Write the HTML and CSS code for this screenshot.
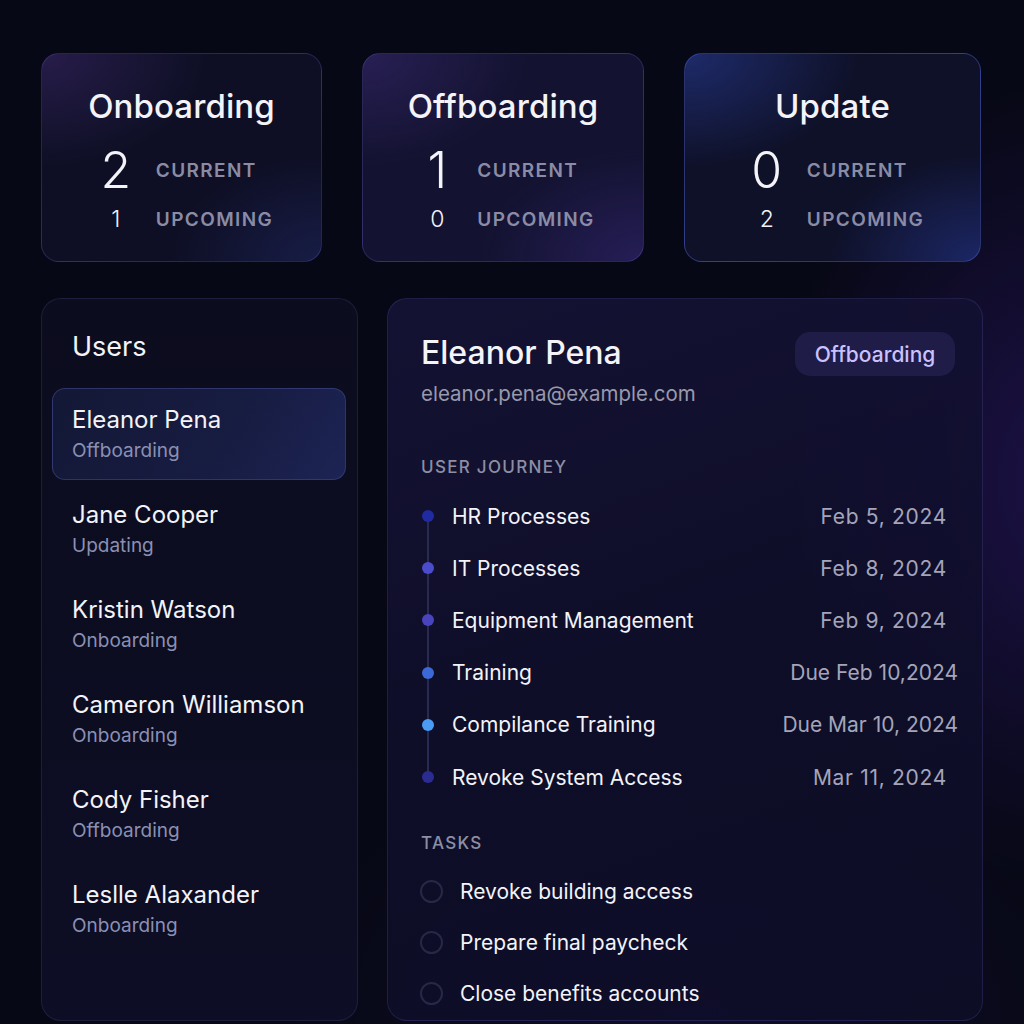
FILE: index.html
```html
<!DOCTYPE html>
<html lang="en">
<head>
<meta charset="utf-8">
<title>User Journeys</title>
<link rel="stylesheet" href="styles.css">
</head>
<body>
<div class="page">
  <section class="summary">
    <div class="stat-card card-purple">
      <h2 class="stat-title">Onboarding</h2>
      <div class="stat-grid">
        <span class="num-big">2</span><span class="stat-label">CURRENT</span>
        <span class="num-small">1</span><span class="stat-label">UPCOMING</span>
      </div>
    </div>
    <div class="stat-card card-violet">
      <h2 class="stat-title">Offboarding</h2>
      <div class="stat-grid">
        <span class="num-big">1</span><span class="stat-label">CURRENT</span>
        <span class="num-small">0</span><span class="stat-label">UPCOMING</span>
      </div>
    </div>
    <div class="stat-card card-blue">
      <h2 class="stat-title">Update</h2>
      <div class="stat-grid">
        <span class="num-big">0</span><span class="stat-label">CURRENT</span>
        <span class="num-small">2</span><span class="stat-label">UPCOMING</span>
      </div>
    </div>
  </section>

  <section class="main">
    <aside class="users">
      <h3 class="users-title">Users</h3>
      <ul class="user-list">
        <li class="user selected"><span class="user-name">Eleanor Pena</span><span class="user-status">Offboarding</span></li>
        <li class="user"><span class="user-name">Jane Cooper</span><span class="user-status">Updating</span></li>
        <li class="user"><span class="user-name">Kristin Watson</span><span class="user-status">Onboarding</span></li>
        <li class="user"><span class="user-name">Cameron Williamson</span><span class="user-status">Onboarding</span></li>
        <li class="user"><span class="user-name">Cody Fisher</span><span class="user-status">Offboarding</span></li>
        <li class="user"><span class="user-name">Leslle Alaxander</span><span class="user-status">Onboarding</span></li>
      </ul>
    </aside>

    <article class="detail">
      <header class="detail-head">
        <div>
          <h1 class="detail-name">Eleanor Pena</h1>
          <div class="detail-email">eleanor.pena@example.com</div>
        </div>
        <span class="badge">Offboarding</span>
      </header>

      <h4 class="section-label journey-label">USER JOURNEY</h4>
      <ul class="timeline">
        <li class="step"><span class="dot d1"></span><span class="step-name">HR Processes</span><span class="step-date">Feb 5, 2024</span></li>
        <li class="step"><span class="dot d2"></span><span class="step-name">IT Processes</span><span class="step-date">Feb 8, 2024</span></li>
        <li class="step"><span class="dot d3"></span><span class="step-name">Equipment Management</span><span class="step-date">Feb 9, 2024</span></li>
        <li class="step"><span class="dot d4"></span><span class="step-name">Training</span><span class="step-date due">Due Feb 10,2024</span></li>
        <li class="step"><span class="dot d5"></span><span class="step-name">Compilance Training</span><span class="step-date due">Due Mar 10, 2024</span></li>
        <li class="step"><span class="dot d6"></span><span class="step-name">Revoke System Access</span><span class="step-date">Mar 11, 2024</span></li>
      </ul>

      <h4 class="section-label tasks-label">TASKS</h4>
      <ul class="tasks">
        <li class="task"><span class="check"></span>Revoke building access</li>
        <li class="task"><span class="check"></span>Prepare final paycheck</li>
        <li class="task"><span class="check"></span>Close benefits accounts</li>
      </ul>
    </article>
  </section>
</div>
</body>
</html>
```

FILE: styles.css
```css
* { box-sizing: border-box; }

html, body { margin: 0; padding: 0; }

body {
  width: 1024px;
  height: 1024px;
  overflow: hidden;
  font-family: Inter, "Noto Sans", "Liberation Sans", sans-serif;
  color: #f3f3f8;
  background:
    radial-gradient(ellipse 420px 560px at 1070px 480px, rgba(58, 30, 140, 0.42), rgba(58, 30, 140, 0) 72%),
    radial-gradient(ellipse 600px 420px at 700px 1024px, rgba(30, 24, 80, 0.35), rgba(30, 24, 80, 0) 70%),
    #070815;
}

.page {
  padding: 53px 0 0 41px;
}

/* summary cards */
.summary {
  display: grid;
  grid-template-columns: 281px 282px 297px;
  column-gap: 40px;
  height: 209px;
}

.stat-card {
  border-radius: 18px;
  border: 1px solid rgba(110, 100, 200, 0.26);
  padding-top: 30px;
  display: flex;
  flex-direction: column;
  align-items: center;
}

.card-purple {
  background:
    radial-gradient(ellipse 220px 150px at 0% 0%, rgba(70, 45, 120, 0.45), rgba(70, 45, 120, 0) 75%),
    radial-gradient(ellipse 200px 140px at 100% 100%, rgba(35, 45, 110, 0.45), rgba(35, 45, 110, 0) 75%),
    #0e0f25;
}
.card-violet {
  background:
    radial-gradient(ellipse 220px 150px at 0% 0%, rgba(60, 45, 120, 0.5), rgba(60, 45, 120, 0) 75%),
    radial-gradient(ellipse 220px 150px at 100% 100%, rgba(55, 42, 125, 0.5), rgba(55, 42, 125, 0) 75%),
    #131230;
}
.card-blue {
  border-color: rgba(80, 100, 210, 0.42);
  background:
    radial-gradient(ellipse 230px 150px at 0% 0%, rgba(40, 60, 150, 0.6), rgba(40, 60, 150, 0) 75%),
    radial-gradient(ellipse 200px 140px at 100% 100%, rgba(40, 60, 160, 0.5), rgba(40, 60, 160, 0) 75%),
    #0f1129;
}

.stat-title {
  margin: 0;
  font-size: 33px;
  font-weight: 500;
  line-height: 44px;
  letter-spacing: 0.1px;
}

.stat-grid {
  margin-top: 15px;
  margin-left: 6px;
  display: grid;
  grid-template-columns: 40px auto;
  grid-template-rows: 54px 44px;
  column-gap: 20px;
  align-items: center;
}

.num-big {
  text-align: center;
  font-size: 50px;
  font-weight: 300;
  line-height: 54px;
}
.num-small {
  text-align: center;
  font-size: 23px;
  font-weight: 300;
  line-height: 30px;
}
.stat-label {
  font-size: 19px;
  font-weight: 600;
  letter-spacing: 1.4px;
  color: #8a8ca6;
}

/* main */
.main {
  margin-top: 36px;
  display: grid;
  grid-template-columns: 317px 596px;
  column-gap: 29px;
  height: 723px;
}

.users {
  border-radius: 20px;
  border: 1px solid rgba(90, 90, 160, 0.22);
  background: linear-gradient(180deg, rgba(12, 13, 30, 0.95), rgba(14, 14, 38, 0.95));
  padding: 30px 11px 0 10px;
}

.users-title {
  margin: 0 0 23px 20px;
  font-size: 27px;
  font-weight: 400;
  line-height: 36px;
}

.user-list {
  list-style: none;
  margin: 0;
  padding: 0;
  display: flex;
  flex-direction: column;
  gap: 3px;
}

.user {
  height: 92px;
  padding: 14px 20px 0 19px;
  display: flex;
  flex-direction: column;
  border-radius: 13px;
  border: 1px solid transparent;
}

.user.selected {
  background: linear-gradient(120deg, #141836 0%, #171c42 60%, #1d2454 100%);
  border-color: rgba(70, 80, 150, 0.5);
}

.user-name {
  font-size: 24px;
  line-height: 33px;
  font-weight: 400;
}
.user-status {
  font-size: 19px;
  line-height: 30px;
  color: #8a90b4;
}

/* detail */
.detail {
  border-radius: 20px;
  border: 1px solid rgba(100, 90, 180, 0.22);
  background: linear-gradient(160deg, rgba(22, 20, 56, 0.85) 0%, rgba(16, 15, 44, 0.85) 50%, rgba(14, 14, 40, 0.85) 100%);
  padding: 34px 27px 0 33px;
}

.detail-head {
  display: flex;
  justify-content: space-between;
  align-items: flex-start;
}

.detail-name {
  margin: 0;
  font-size: 32px;
  font-weight: 500;
  line-height: 40px;
}

.detail-email {
  margin-top: 5px;
  font-size: 20.5px;
  line-height: 32px;
  color: #9899ad;
}

.badge {
  margin-top: -1px;
  width: 160px;
  height: 44px;
  border-radius: 15px;
  background: #1f1c48;
  color: #c9c2ff;
  font-size: 21px;
  font-weight: 500;
  display: flex;
  align-items: center;
  justify-content: center;
}

.section-label {
  margin: 0;
  font-size: 17px;
  font-weight: 500;
  letter-spacing: 1.3px;
  color: #8d8ea4;
  line-height: 24px;
}

.journey-label { margin-top: 45px; }

.timeline {
  list-style: none;
  margin: 11px 0 0 0;
  padding: 0;
  position: relative;
  padding-right: 8px;
}

.timeline::before {
  content: "";
  position: absolute;
  left: 6px;
  top: 26px;
  bottom: 26px;
  width: 2px;
  background: #282a52;
}

.step {
  height: 52.2px;
  display: flex;
  align-items: center;
  position: relative;
}

.dot {
  width: 12px;
  height: 12px;
  border-radius: 50%;
  flex: none;
  margin-right: 18px;
  margin-left: 1px;
  position: relative;
}
.d1 { background: #212ba0; }
.d2 { background: #4b4ccb; }
.d3 { background: #4944be; }
.d4 { background: #3b6ad8; }
.d5 { background: #4a9bf2; }
.d6 { background: #2a2c92; }

.step-name {
  font-size: 21px;
  font-weight: 400;
  flex: 1;
}

.step-date {
  font-size: 21px;
  color: #a4a5ba;
  letter-spacing: 0.7px;
}
.step-date.due { margin-right: -11px; letter-spacing: 0; }

.tasks-label { margin-top: 28px; }

.tasks {
  list-style: none;
  margin: 11px 0 0 0;
  padding: 0;
}

.task {
  height: 51px;
  display: flex;
  align-items: center;
  font-size: 21px;
}

.check {
  width: 23px;
  height: 23px;
  border-radius: 50%;
  border: 2px solid #262846;
  margin: 0 17px 0 -1px;
  flex: none;
}
```
